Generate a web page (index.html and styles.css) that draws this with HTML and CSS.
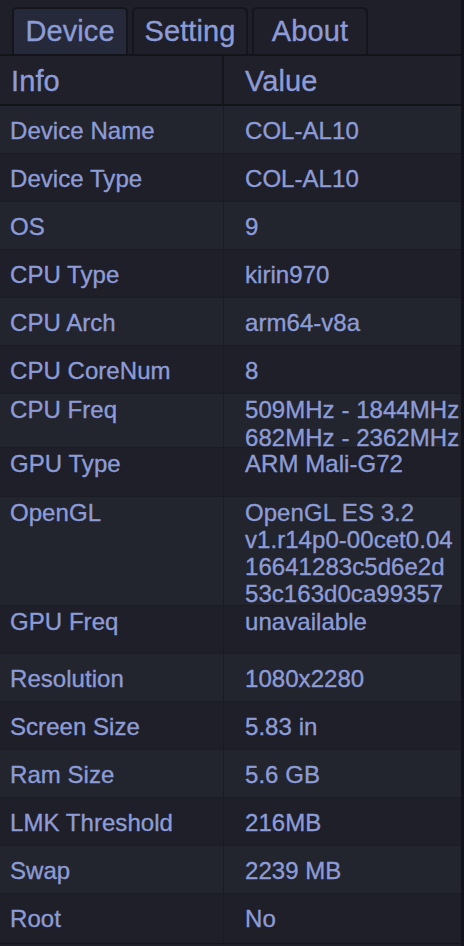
FILE: index.html
```html
<!DOCTYPE html>
<html>
<head>
<meta charset="utf-8">
<link rel="stylesheet" href="styles.css">
</head>
<body>
<div class="app">
  <div class="tabs">
    <div class="tab active">Device</div>
    <div class="tab">Setting</div>
    <div class="tab">About</div>
  </div>
  <div class="table">
    <div class="row head"><div class="cell key">Info</div><div class="cell val">Value</div></div>
    <div class="row"><div class="cell key">Device Name</div><div class="cell val">COL-AL10</div></div>
    <div class="row"><div class="cell key">Device Type</div><div class="cell val">COL-AL10</div></div>
    <div class="row"><div class="cell key">OS</div><div class="cell val">9</div></div>
    <div class="row"><div class="cell key">CPU Type</div><div class="cell val">kirin970</div></div>
    <div class="row"><div class="cell key">CPU Arch</div><div class="cell val">arm64-v8a</div></div>
    <div class="row"><div class="cell key">CPU CoreNum</div><div class="cell val">8</div></div>
    <div class="row top r-freq"><div class="cell key">CPU Freq</div><div class="cell val">509MHz - 1844MHz<br>682MHz - 2362MHz</div></div>
    <div class="row top r-gpu"><div class="cell key">GPU Type</div><div class="cell val">ARM Mali-G72</div></div>
    <div class="row top r-gl"><div class="cell key">OpenGL</div><div class="cell val">OpenGL ES 3.2<br>v1.r14p0-00cet0.04<br>16641283c5d6e2d<br>53c163d0ca99357</div></div>
    <div class="row top r-gpufreq"><div class="cell key">GPU Freq</div><div class="cell val">unavailable</div></div>
    <div class="row"><div class="cell key">Resolution</div><div class="cell val">1080x2280</div></div>
    <div class="row"><div class="cell key">Screen Size</div><div class="cell val">5.83 in</div></div>
    <div class="row"><div class="cell key">Ram Size</div><div class="cell val">5.6 GB</div></div>
    <div class="row"><div class="cell key">LMK Threshold</div><div class="cell val">216MB</div></div>
    <div class="row"><div class="cell key">Swap</div><div class="cell val">2239 MB</div></div>
    <div class="row last"><div class="cell key">Root</div><div class="cell val">No</div></div>
  </div>
</div>
</body>
</html>
```

FILE: styles.css
```css
* { box-sizing: border-box; }
html, body {
  margin: 0;
  padding: 0;
  background: #1e1f29;
}
body {
  font-family: "Liberation Sans", Arial, sans-serif;
  color: #8d9cd7;
  -webkit-text-stroke: 0.35px #8d9cd7;
  width: 464px;
  height: 946px;
  overflow: hidden;
}
.app {
  width: 464px;
  height: 946px;
  border-right: 3px solid #13141a;
  background: #1e1f29;
}
.tabs {
  display: flex;
  gap: 4px;
  padding: 7px 0 0 12px;
  height: 56px;
  border-bottom: 2px solid #13141a;
}
.tab {
  width: 116px;
  height: 47px;
  border: 2px solid #15161d;
  border-bottom: none;
  border-radius: 5px 5px 0 0;
  text-align: center;
  font-size: 29px;
  line-height: 32px;
  padding-top: 6px;
  letter-spacing: 0.1px;
}
.tab.active {
  background: #252939;
}
.table {
  display: flex;
  flex-direction: column;
}
.row {
  display: grid;
  grid-template-columns: 224px 1fr;
  height: 48px;
  border-bottom: 1px solid #1a1b23;
  font-size: 24px;
  line-height: 28px;
  letter-spacing: 0.05px;
}
.row:nth-child(even) {
  background: #22242e;
}
.cell {
  padding-top: 11px;
  white-space: nowrap;
}
.cell.key {
  padding-left: 10px;
  border-right: 1px solid #1a1b23;
}
.cell.val {
  padding-left: 21px;
}
.row.head {
  height: 50px;
  background: #1f2029;
  border-bottom: 2px solid #13141a;
  font-size: 29px;
  line-height: 32px;
  letter-spacing: 0.1px;
}
.row.head .cell { padding-top: 9px; }
.row.head .cell.key {
  padding-left: 11px;
  border-right: 2px solid #15161d;
}
.row.head .cell.val { padding-left: 21px; }
.row.top .cell { padding-top: 2px; }
.r-freq { height: 54px; }
.r-gpu { height: 49px; }
.r-gpu .cell { padding-top: 3px; }
.r-gl { height: 109px; line-height: 27px; }
.r-gl .cell { padding-top: 3px; }
.r-gpufreq { height: 48px; }
.row.last { height: 50px; border-bottom: 1px solid #16171e; }
```
